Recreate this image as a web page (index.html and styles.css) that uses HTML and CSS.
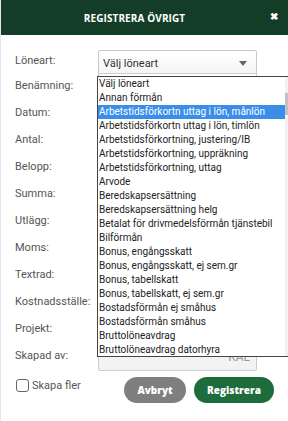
FILE: index.html
```html
<!DOCTYPE html>
<html lang="sv">
<head>
  <meta charset="UTF-8">
  <meta name="viewport" content="width=device-width, initial-scale=1.0">
  <title>Registrera övrigt</title>
  <link rel="stylesheet" href="styles.css">
</head>
<body>
  <div class="dialog">
    <div class="dialog-header">
      <h2>REGISTRERA ÖVRIGT</h2>
      <span class="close">&#10006;</span>
    </div>

    <div class="dialog-body">
      <div class="form-row first">
        <label>Löneart:</label>
        <div class="select">
          <span>Välj löneart</span>
          <span class="arrow"></span>
        </div>
      </div>
      <div class="form-row"><label>Benämning:</label><input type="text"></div>
      <div class="form-row"><label>Datum:</label><input type="text"></div>
      <div class="form-row"><label>Antal:</label><input type="text"></div>
      <div class="form-row"><label>Belopp:</label><input type="text"></div>
      <div class="form-row"><label>Summa:</label><input type="text"></div>
      <div class="form-row"><label>Utlägg:</label><input type="text"></div>
      <div class="form-row"><label>Moms:</label><input type="text"></div>
      <div class="form-row"><label>Textrad:</label><input type="text"></div>
      <div class="form-row"><label>Kostnadsställe:</label><input type="text"></div>
      <div class="form-row"><label>Projekt:</label><input type="text"></div>
      <div class="form-row"><label>Skapad av:</label><input type="text" class="readonly" value="KAL" readonly></div>

      <div class="form-footer">
        <label class="checkbox-label"><span class="checkbox"></span>Skapa fler</label>
        <div class="buttons">
          <button class="btn btn-cancel">Avbryt</button>
          <button class="btn btn-save">Registrera</button>
        </div>
      </div>

      <!-- open dropdown for Löneart -->
      <div class="dropdown">
        <ul class="options">
          <li>Välj löneart</li>
          <li>Annan förmån</li>
          <li class="selected">Arbetstidsförkortn uttag i lön, månlön</li>
          <li>Arbetstidsförkortn uttag i lön, timlön</li>
          <li>Arbetstidsförkortning, justering/IB</li>
          <li>Arbetstidsförkortning, uppräkning</li>
          <li>Arbetstidsförkortning, uttag</li>
          <li>Arvode</li>
          <li>Beredskapsersättning</li>
          <li>Beredskapsersättning helg</li>
          <li>Betalat för drivmedelsförmån tjänstebil</li>
          <li>Bilförmån</li>
          <li>Bonus, engångsskatt</li>
          <li>Bonus, engångsskatt, ej sem.gr</li>
          <li>Bonus, tabellskatt</li>
          <li>Bonus, tabellskatt, ej sem.gr</li>
          <li>Bostadsförmån ej småhus</li>
          <li>Bostadsförmån småhus</li>
          <li>Bruttolöneavdrag</li>
          <li>Bruttolöneavdrag datorhyra</li>
        </ul>
        <div class="scrollbar"><div class="thumb"></div></div>
      </div>
    </div>
  </div>
</body>
</html>
```

FILE: styles.css
```css
body {
  margin: 0;
  padding: 0;
  font-family: Roboto, "Liberation Sans", sans-serif;
  background: #fff;
  color: #333;
  overflow: hidden;
}

.dialog {
  width: 288px;
  height: 421px;
  border-left: 1px solid #e6e6e6;
  box-sizing: border-box;
}

.dialog-header {
  height: 35px;
  background: #143d28;
  color: #fff;
  display: flex;
  align-items: center;
  justify-content: center;
  position: relative;
}

.dialog-header h2 {
  margin: 0 0 0 -20px;
  font-family: "Open Sans", sans-serif;
  font-size: 10px;
  font-weight: 700;
  letter-spacing: 0.1px;
}

.close {
  position: absolute;
  right: 10px;
  top: 11px;
  font-size: 10px;
  font-weight: bold;
}

.dialog-body {
  position: relative;
  padding: 11px 0 0 14px;
}

.form-row {
  display: flex;
  align-items: center;
  height: 27px;
}

.form-row label {
  width: 83px;
  font-size: 11px;
  color: #555;
}

.form-row input {
  width: 159px;
  height: 25px;
  box-sizing: border-box;
  border: 1px solid #ccc;
  border-radius: 2px;
  padding: 0 6px;
  font-family: inherit;
  font-size: 11px;
}

.form-row input.readonly {
  height: 27px;
  margin-top: 3px;
  background: #f3f3f3;
  color: #999;
  text-align: right;
  font-size: 12px;
}

.form-row.first {
  height: 29px;
  margin-bottom: -3px;
  align-items: flex-start;
}

.form-row.first label {
  line-height: 29px;
}

.select {
  width: 159px;
  height: 26px;
  box-sizing: border-box;
  border: 1px solid #c8c8c8;
  border-radius: 2px;
  background: linear-gradient(#fff, #f4f4f4);
  display: flex;
  align-items: center;
  justify-content: space-between;
  padding: 0 9px 0 4px;
  font-size: 11px;
  color: #333;
  margin-top: 4px;
}

.arrow {
  width: 0;
  height: 0;
  border-left: 4px solid transparent;
  border-right: 4px solid transparent;
  border-top: 5px solid #666;
}

.form-footer {
  display: flex;
  align-items: center;
  justify-content: space-between;
  margin-top: 8px;
  padding-right: 14px;
}

.checkbox-label {
  display: flex;
  align-items: center;
  font-size: 11px;
  color: #555;
  margin-top: -10px;
  margin-left: 1px;
}

.checkbox {
  width: 11px;
  height: 11px;
  border: 1px solid #666;
  border-radius: 3px;
  margin-right: 3px;
}

.buttons {
  display: flex;
  gap: 8px;
}

.btn {
  font-family: "Open Sans", sans-serif;
  font-size: 10px;
  font-weight: 800;
  color: #fff;
  border: none;
  border-radius: 13px;
  height: 26px;
  cursor: pointer;
}

.btn-cancel {
  background: #7f7f7f;
  width: 62px;
}

.btn-save {
  background: #1e6b3b;
  width: 80px;
}

.dropdown {
  position: absolute;
  left: 96px;
  top: 41px;
  width: 196px;
  height: 281px;
  background: #fff;
  border: 1px solid #444;
  box-sizing: border-box;
  display: flex;
  overflow: hidden;
}

.options {
  list-style: none;
  margin: 0;
  padding: 0;
  flex: 1;
}

.options li {
  height: 14px;
  line-height: 14px;
  font-size: 10px;
  color: #222;
  padding-left: 1px;
  white-space: nowrap;
}

.options li.selected {
  background: #3a8ee9;
  color: #fff;
}

.scrollbar {
  width: 7px;
  background: #f1f1f1;
}

.thumb {
  margin-top: 16px;
  height: 22px;
  background: #c1c1c1;
}
```
